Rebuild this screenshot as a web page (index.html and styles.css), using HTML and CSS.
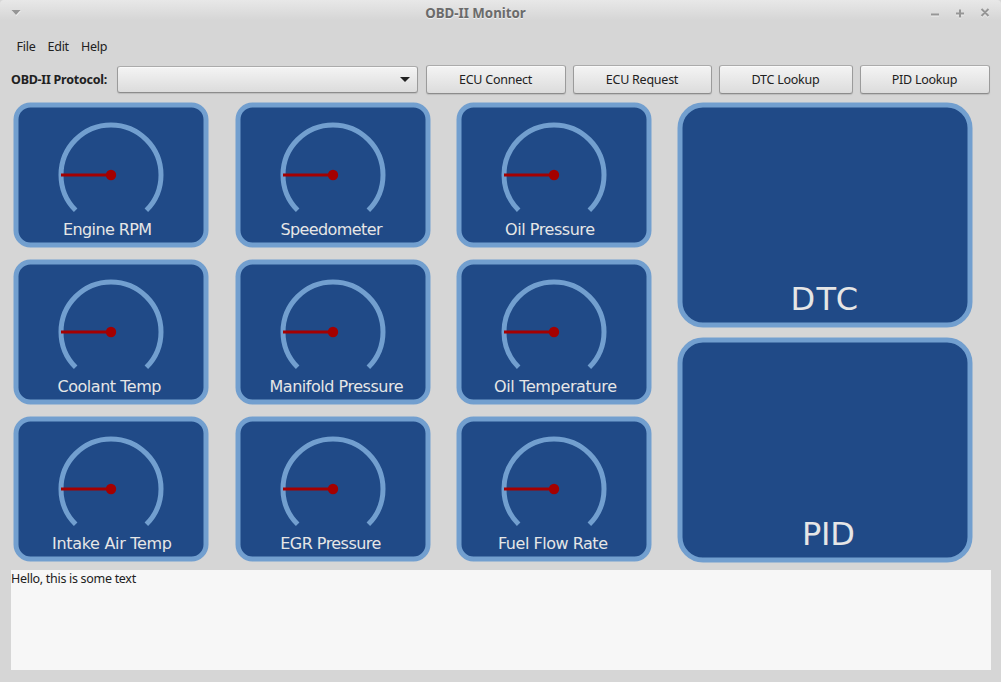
FILE: index.html
```
<!DOCTYPE html>
<html lang="en">
<head>
<meta charset="utf-8">
<title>OBD-II Monitor</title>
<link rel="stylesheet" href="styles.css">
</head>
<body>
<div class="window">
  <header class="titlebar">
    <svg class="title-menu" width="10" height="7" viewBox="0 0 10 7"><path class="glint" d="M1 2h9l-4.500 5z"/><path d="M.5 1h9L5 6z"/></svg>
    <h1 class="title">OBD-II Monitor</h1>
    <svg class="controls" width="62" height="12" viewBox="0 0 62 12">
      <g class="shine" transform="translate(0 1)"><path d="M1 7.500h8M26 6.500h8M30 2.500v8M51.500 2l7 7M58.500 2l-7 7"/></g>
      <g class="mark"><path d="M1 7.500h8M26 6.500h8M30 2.500v8M51.500 2l7 7M58.500 2l-7 7"/></g>
    </svg>
  </header>
  <nav class="menubar"><span>File</span><span>Edit</span><span>Help</span></nav>
  <div class="toolbar">
    <label class="protocol">OBD-II Protocol:</label>
    <div class="combo"><svg width="10" height="5" viewBox="0 0 10 5"><path d="M0 0h10L5 5z"/></svg></div>
    <button class="btn wide">ECU Connect</button>
    <button class="btn mid">ECU Request</button>
    <button class="btn dtc">DTC Lookup</button>
    <button class="btn pid">PID Lookup</button>
  </div>
  <main class="dash">
    <div class="gauges" id="gauges"></div>
    <div class="panels">
      <svg class="panel" width="296" height="226" viewBox="0 0 296 226"><rect class="card" x="3" y="3" width="290" height="220" rx="23"/><text class="big" x="113.500" y="208" textLength="67.500">DTC</text></svg>
      <svg class="panel" width="296" height="226" viewBox="0 0 296 226"><rect class="card" x="3" y="3" width="290" height="220" rx="23"/><text class="big" x="125" y="208" textLength="53">PID</text></svg>
    </div>
  </main>
  <div class="log">Hello, this is some text</div>
</div>
<script src="gauges.js"></script>
</body>
</html>
```
FILE: gauges.js
```
// label, horizontal centre of the label within its card, label width
const gauges = [
  ["Engine RPM", 94.5, 89], ["Speedometer", 96.5, 102], ["Oil Pressure", 94, 90],
  ["Coolant Temp", 96.5, 104], ["Manifold Pressure", 101.5, 134], ["Oil Temperature", 99.5, 123],
  ["Intake Air Temp", 99, 120], ["EGR Pressure", 95.8, 101], ["Fuel Flow Rate", 97, 110]
];
document.getElementById("gauges").innerHTML = gauges.map(([label, x, w]) => `
  <svg class="gauge" width="196" height="146" viewBox="0 0 196 146">
    <rect class="card" x="3" y="3" width="190" height="140" rx="14.500"/>
    <path class="dial" d="M62.650 108.350A50 50 0 1 1 133.350 108.350"/>
    <path class="needle" d="M48 73H98"/>
    <circle class="hub" cx="98" cy="73" r="5.200"/>
    <text class="label" x="${x}" y="133" textLength="${w}">${label}</text>
  </svg>`).join("");
```
FILE: styles.css
```
* { box-sizing: border-box; }
body { margin: 0; background: #d6d6d6; font: 12.500px/16px "Noto Sans", sans-serif; letter-spacing: -.25px; color: #212121; }
.window { width: 1001px; height: 682px; overflow: hidden; display: flex; flex-direction: column; background: linear-gradient(#e8e8e8, #d6d6d6 20px); border-radius: 4px 4px 0 0; }
.titlebar { height: 26px; display: grid; grid-template-columns: 43px 1fr 93px; align-items: center; }
.title { margin: 0; text-align: center; font-size: 13.300px; line-height: 18px; letter-spacing: 0; font-weight: 700; color: #6b6b6b; text-shadow: 0 1px #f0f0f0; }
.title-menu { margin-left: 11px; margin-top: -2px; fill: #969696; }
.glint { fill: #f0f0f0; }
.controls { margin-left: 22px; fill: none; stroke-width: 2; }
.mark { stroke: #969696; }
.shine { stroke: #f0f0f0; }
.menubar { height: 39px; padding: 13px 0 0 16.500px; display: flex; gap: 12px; }
.toolbar { height: 37px; display: flex; align-items: flex-start; padding-left: 11px; }
.protocol { width: 106px; font-weight: 700; line-height: 29px; white-space: nowrap; }
.combo, .btn { border: 1px solid #9b9b9b; border-top-color: #ababab; border-bottom-color: #8c8c8c; border-radius: 3px; background: linear-gradient(#f4f4f4, #dcdcdc); box-shadow: inset 0 1px #fafafa, 0 1px 1px #bdbdbd; }
.combo { width: 301px; height: 27px; margin-top: 1px; margin-right: 8px; display: flex; align-items: center; justify-content: flex-end; padding-right: 7px; fill: #212121; }
.btn { height: 29px; padding: 0 1px 0 0; font: inherit; letter-spacing: inherit; color: inherit; }
.wide { width: 140px; margin-right: 7px; }
.mid { width: 139px; margin-right: 7px; }
.dtc { width: 134px; margin-right: 7px; }
.pid { width: 130px; }
.dash { height: 468px; padding-left: 13px; display: flex; letter-spacing: 0; }
.gauges { width: 664px; display: grid; grid-template-columns: 222px 221px 221px; grid-template-rows: repeat(3, 157px); }
.gauge, .panel { display: block; }
.panels { display: flex; flex-direction: column; gap: 9px; }
.card { fill: #204a87; stroke: #729fcf; stroke-width: 5; }
.dial { fill: none; stroke: #729fcf; stroke-width: 5; }
.needle { stroke: #a40000; stroke-width: 3; }
.hub { fill: #a40000; }
.label { fill: #e6e6e6; font: 16px "DejaVu Sans", sans-serif; text-anchor: middle; }
.big { fill: #e6e6e6; font: 32px "DejaVu Sans", sans-serif; }
.log { width: 980px; height: 100px; margin-left: 11px; padding-top: 1px; letter-spacing: -.3px; background: #f7f7f7; }
```
